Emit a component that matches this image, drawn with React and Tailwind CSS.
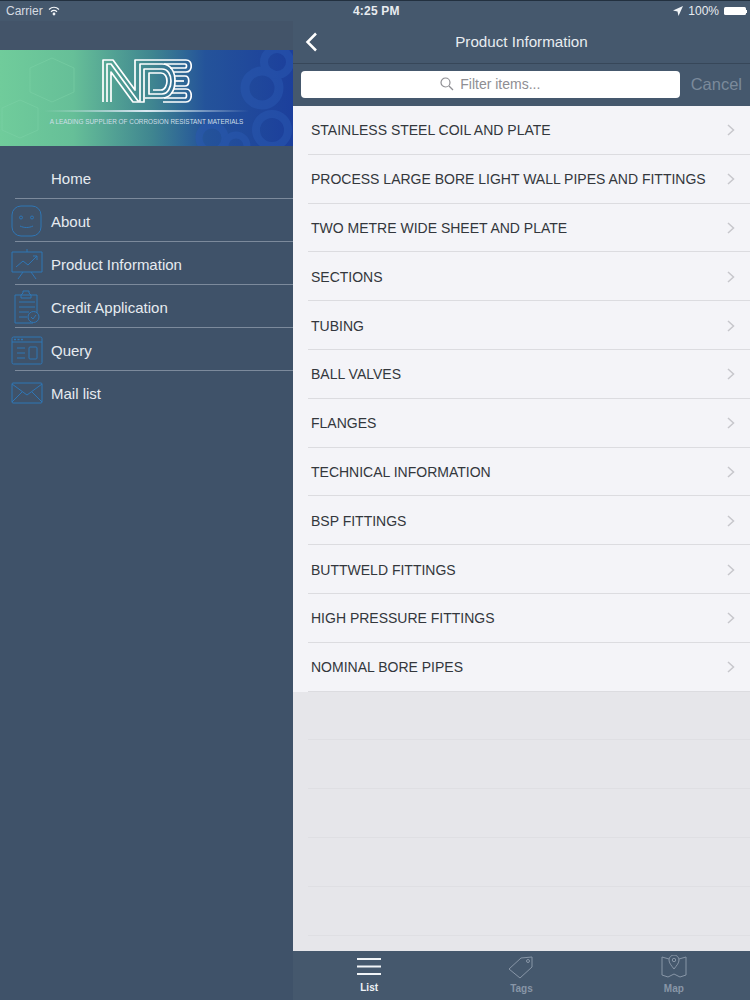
const FONT = "font-['Liberation_Sans',Arial,sans-serif]";

const items = [
  'STAINLESS STEEL COIL AND PLATE',
  'PROCESS LARGE BORE LIGHT WALL PIPES AND FITTINGS',
  'TWO METRE WIDE SHEET AND PLATE',
  'SECTIONS',
  'TUBING',
  'BALL VALVES',
  'FLANGES',
  'TECHNICAL INFORMATION',
  'BSP FITTINGS',
  'BUTTWELD FITTINGS',
  'HIGH PRESSURE FITTINGS',
  'NOMINAL BORE PIPES',
];

function FaceIcon() {
  return (
    <svg width="32" height="32" viewBox="0 0 32 32" fill="none" stroke="#2f76b5" strokeWidth="1">
      <rect x="1" y="1" width="29" height="30" rx="9" />
      <circle cx="10" cy="12.500" r="1.500" />
      <circle cx="21" cy="12.500" r="1.500" />
      <path d="M9 21c4 2 9 2 13 0" />
    </svg>
  );
}

function ChartIcon() {
  return (
    <svg width="32" height="30" viewBox="0 0 32 30" fill="none" stroke="#2f76b5" strokeWidth="1">
      <path d="M1 3h30v20H1zM16 0v3M12 23l-5 7M20 23l5 7" />
      <path d="M5 18l7-6 5 4 9-9M22 7h4v4" />
    </svg>
  );
}

function ClipboardIcon() {
  return (
    <svg width="26" height="34" viewBox="0 0 26 34" fill="none" stroke="#2f76b5" strokeWidth="1">
      <path d="M19 33H1V5h6l2-2V1h6v2l2 2h6v18" />
      <path d="M7 5h10v3H7zM5 12h16M5 17h16M5 22h10M5 27h8" />
      <circle cx="19.500" cy="27" r="5.500" fill="#3f5269" />
      <path d="M17 27l2 2 3-4" />
    </svg>
  );
}

function WindowIcon() {
  return (
    <svg width="32" height="29" viewBox="0 0 32 29" fill="none" stroke="#2f76b5" strokeWidth="1">
      <rect x="1" y="1" width="30" height="27" rx="1.500" />
      <path d="M1 6h30M6 12h8M6 17h8M6 22h8" />
      <rect x="18" y="11" width="8" height="12" rx="1" />
      <path d="M3 3.500h2M6.500 3.500h2M10 3.500h2" strokeWidth="1.500" />
    </svg>
  );
}

function MailIcon() {
  return (
    <svg width="32" height="22" viewBox="0 0 32 22" fill="none" stroke="#2f76b5" strokeWidth="1">
      <rect x="1" y="1" width="30" height="20" rx="1" />
      <path d="M1 2l15 11L31 2M1 20l10-10M31 20L21 10" />
    </svg>
  );
}

function NdeLogo() {
  return (
    <svg width="90" height="44" viewBox="0 0 90 44" fill="none" stroke="#ffffff" strokeWidth="1.700" strokeLinejoin="round">
      <path d="M1 43V1h10l22 30V1h28" />
      <path d="M5 43V5h4l27 37h2V5h22c9 0 13 8 13 17s-4 17-13 17H43" />
      <path d="M9 43V13l22 30h11V10h18c6 0 9 6 9 12s-3 13-9 13H47V14h12c4 0 6 4 6 8s-2 9-6 9h-8" />
      <path d="M61 1h23c7 0 7 12 0 12H72" />
      <path d="M61 43h23c7 0 7-13 0-13H72" />
      <path d="M62 5h21c2 0 2 4 0 4H68" />
      <path d="M62 39h21c2 0 2-5 0-5H69" />
      <path d="M72 17h11c5 0 5 10 0 10H72" />
      <path d="M72 22h10" />
    </svg>
  );
}

function Banner() {
  return (
    <div className="relative flex h-[96px] flex-col items-center overflow-hidden bg-[linear-gradient(90deg,#70cc9b_0%,#66bf98_25%,#3f8590_52%,#24539a_70%,#1c3f9c_100%)]">
      <svg className="absolute top-0 left-0 opacity-50" width="293" height="96" viewBox="0 0 293 96" fill="none">
        <circle cx="262" cy="38" r="17" stroke="#2a59b2" strokeWidth="9" />
        <circle cx="277" cy="12" r="13" stroke="#2a59b2" strokeWidth="8" />
        <circle cx="272" cy="80" r="16" stroke="#2a59b2" strokeWidth="8" />
        <circle cx="212" cy="88" r="13" stroke="#2a59b2" strokeWidth="7" />
        <circle cx="236" cy="96" r="11" stroke="#2a59b2" strokeWidth="7" />
        <path d="M30 18l22-10 22 10v24l-22 10-22-10z" stroke="#7ed3a8" />
        <path d="M2 58l18-8 18 8v22l-18 8-18-8z" stroke="#7ed3a8" />
      </svg>
      <div className="relative mt-[9px]">
        <NdeLogo />
      </div>
      <div className="relative mt-[7px] h-[2px] w-[205px] bg-gradient-to-r from-transparent via-[#dbe9f2] to-transparent" />
      <div className="relative mt-[5px] text-[6.400px] leading-[9px] text-[#cfdfe8]">
        A LEADING SUPPLIER OF CORROSION RESISTANT MATERIALS
      </div>
    </div>
  );
}

function MenuRow({ label, icon, last }) {
  return (
    <div className="relative h-[43px]">
      <div className="flex h-[42px] items-center pt-[4px] pl-[51px] text-[15px] text-[#e6ebf0]">{label}</div>
      {!last && <div className="ml-[15px] h-px bg-[#7c8a9c]" />}
      {icon && (
        <div className="absolute top-0 left-0 flex h-[44px] w-[53px] items-center justify-center">{icon}</div>
      )}
    </div>
  );
}

function Sidebar() {
  return (
    <div className="w-[293px] shrink-0 bg-[#3f5269]">
      <div className="h-[29px] bg-[#435469]" />
      <Banner />
      <div className="mt-[10px]">
        <MenuRow label="Home" />
        <MenuRow label="About" icon={<FaceIcon />} />
        <MenuRow label="Product Information" icon={<ChartIcon />} />
        <MenuRow label="Credit Application" icon={<ClipboardIcon />} />
        <MenuRow label="Query" icon={<WindowIcon />} />
        <MenuRow label="Mail list" icon={<MailIcon />} last />
      </div>
    </div>
  );
}

function ListRow({ label }) {
  return (
    <div className="h-[48.800px] bg-[#f4f4f8]">
      <div className="flex h-[47.800px] items-center justify-between pt-[2px] pr-[15px] pl-[18px] text-[14px] text-[#33373c]">
        <span>{label}</span>
        <svg className="-mt-[1px]" width="8" height="12" viewBox="0 0 8 12" fill="none" stroke="#c7c7cc" strokeWidth="1.500">
          <path d="M1 1l5.500 5L1 11" />
        </svg>
      </div>
      <div className="ml-[15px] h-px bg-[#dcdce0]" />
    </div>
  );
}

function TabBar() {
  return (
    <div className="grid h-[49px] shrink-0 grid-cols-3 bg-[#45586d]">
      <div className="flex flex-col items-center pt-[6px] text-[10px] leading-[14px] font-bold text-[#eef2f6]">
        <svg width="26" height="19" viewBox="0 0 26 19" fill="none" stroke="#f1f4f7" strokeWidth="2.200">
          <path d="M1 2h24M1 9.500h24M1 17h24" />
        </svg>
        <span className="mt-[5px]">List</span>
      </div>
      <div className="flex flex-col items-center pt-[4px] text-[10px] leading-[14px] font-bold text-[#8896a7]">
        <svg width="26" height="24" viewBox="0 0 26 24" fill="none" stroke="#8896a7" strokeWidth="1">
          <path d="M1 14L13 3l11-1v10L12 23z" />
          <circle cx="20" cy="6" r="1.500" />
        </svg>
        <span className="mt-[3px]">Tags</span>
      </div>
      <div className="flex flex-col items-center pt-[4px] text-[10px] leading-[14px] font-bold text-[#8896a7]">
        <svg width="26" height="24" viewBox="0 0 26 24" fill="none" stroke="#8896a7" strokeWidth="1">
          <path d="M8 4L1 2v18l6 2 6-3 6 3 6-2V2l-7 2" />
          <path d="M13 14c-3-4-5-6-5-9a5 5 0 0 1 10 0c0 3-2 5-5 9z" />
          <circle cx="13" cy="5" r="1.700" />
        </svg>
        <span className="mt-[3px]">Map</span>
      </div>
    </div>
  );
}

function MainPanel() {
  return (
    <div className="flex min-w-0 flex-1 flex-col bg-[#45586d]">
      <div className="relative flex h-[43px] shrink-0 items-center justify-center border-b border-[#374759] text-[15.200px] text-[#e8ecf0]">
        <svg className="absolute top-[11px] left-[12px]" width="13" height="20" viewBox="0 0 13 20" fill="none" stroke="#ffffff" strokeWidth="2.500">
          <path d="M11 1.500L2.500 10l8.500 8.500" />
        </svg>
        Product Information
      </div>
      <div className="flex h-[42px] shrink-0 items-center px-[8px] pb-[2px]">
        <div className="flex h-[27px] w-[379px] items-center justify-center gap-[6px] rounded-[4px] bg-white text-[14px] text-[#8e8e93]">
          <svg width="14" height="14" viewBox="0 0 14 14" fill="none" stroke="#8e8e93" strokeWidth="1.200">
            <circle cx="5.500" cy="5.500" r="4.500" />
            <path d="M9 9l4 4" />
          </svg>
          Filter items...
        </div>
        <span className="ml-[11px] text-[16.500px] text-[#7b8a9b]">Cancel</span>
      </div>
      <div className="flex-1 overflow-hidden bg-[#e6e6ea]">
        {items.map((item) => (
          <ListRow key={item} label={item} />
        ))}
        <div className="ml-[15px]">
          {[0, 1, 2, 3, 4].map((n) => (
            <div key={n} className="h-[48.900px] border-b border-[#dfdfe3]" />
          ))}
        </div>
      </div>
      <TabBar />
    </div>
  );
}

function StatusBar() {
  return (
    <div className="relative flex h-[21px] shrink-0 items-center justify-between border-t border-[#22303f] bg-[#45586d] pr-[3px] pl-[6px] text-[12px] text-[#e8ecf0]">
      <div className="flex items-center gap-[5px]">
        <span className="text-[#d5dbe2]">Carrier</span>
        <svg width="12" height="10" viewBox="0 0 12 10" fill="none" stroke="#f1f4f7" strokeWidth="1.200">
          <path d="M1 3.500c3-2.800 7-2.800 10 0M3 5.700c1.800-1.500 4.200-1.500 6 0" />
          <circle cx="6" cy="8" r="0.800" fill="#f1f4f7" />
        </svg>
      </div>
      <span className="absolute left-[353px] font-bold tracking-[0.2px]">4:25 PM</span>
      <div className="flex items-center gap-[5px]">
        <svg width="10" height="10" viewBox="0 0 10 10" fill="#f1f4f7">
          <path d="M10 0L0 4.500l4.500 1L5.500 10z" />
        </svg>
        <span>100%</span>
        <div className="flex items-center">
          <div className="h-[8px] w-[22px] rounded-[1.500px] bg-white" />
          <div className="h-[3px] w-px bg-white" />
        </div>
      </div>
    </div>
  );
}

export default function App() {
  return (
    <div className={`flex h-[1000px] w-[750px] flex-col overflow-hidden ${FONT}`}>
      <StatusBar />
      <div className="flex min-h-0 flex-1">
        <Sidebar />
        <MainPanel />
      </div>
    </div>
  );
}
